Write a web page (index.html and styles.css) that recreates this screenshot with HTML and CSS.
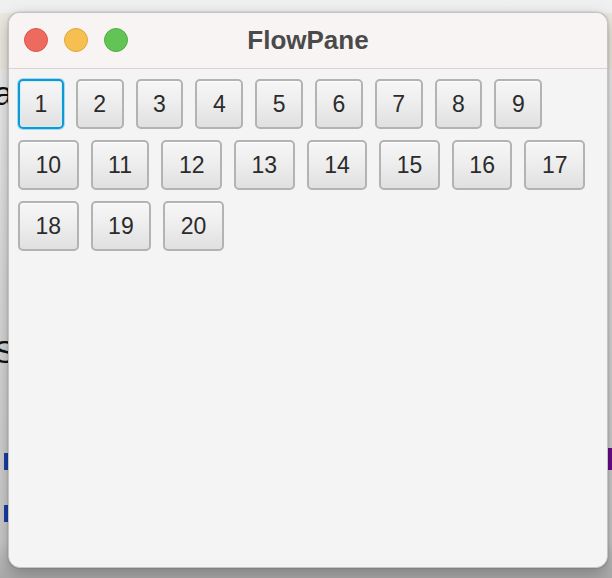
FILE: index.html
```html
<!DOCTYPE html>
<html>
<head>
<meta charset="utf-8">
<title>FlowPane</title>
<link rel="stylesheet" href="styles.css">
</head>
<body>
<div class="desktop">
  <div class="backdrop">
    <div class="bg-strip"></div>
    <span class="frag frag-a">a</span>
    <span class="frag frag-s">S</span>
    <span class="mark mark-1"></span>
    <span class="mark mark-2"></span>
    <span class="mark mark-3"></span>
  </div>
  <div class="window">
    <div class="titlebar">
      <div class="lights">
        <span class="light red"></span>
        <span class="light yellow"></span>
        <span class="light green"></span>
      </div>
      <div class="title">FlowPane</div>
    </div>
    <div class="flow">
      <button class="btn focused">1</button>
      <button class="btn">2</button>
      <button class="btn">3</button>
      <button class="btn">4</button>
      <button class="btn">5</button>
      <button class="btn">6</button>
      <button class="btn">7</button>
      <button class="btn">8</button>
      <button class="btn">9</button>
      <button class="btn">10</button>
      <button class="btn">11</button>
      <button class="btn">12</button>
      <button class="btn">13</button>
      <button class="btn">14</button>
      <button class="btn">15</button>
      <button class="btn">16</button>
      <button class="btn">17</button>
      <button class="btn">18</button>
      <button class="btn">19</button>
      <button class="btn">20</button>
    </div>
  </div>
</div>
</body>
</html>
```
FILE: styles.css
```css
* { box-sizing: border-box; }
html, body {
  margin: 0;
  padding: 0;
  width: 612px;
  height: 578px;
  overflow: hidden;
  background: #e4e4e4;
  font-family: "Liberation Sans", Arial, sans-serif;
}
.desktop {
  display: grid;
  width: 612px;
  height: 578px;
  background: linear-gradient(to bottom, #f0f0f0 0px, #ededed 60px, #d9d9d9 300px, #c9c9c9 540px, #aaaaaa 578px);
}
.backdrop, .window { grid-area: 1 / 1; }
.backdrop {
  position: relative;
  width: 612px;
  height: 578px;
}
.bg-strip {
  height: 56px;
  margin-top: 13px;
  background: #ebe9df;
}
.frag {
  position: absolute;
  color: #111;
  font-size: 34px;
  line-height: 1;
}
.frag-a { left: -6px; top: 76px; }
.frag-s { left: -6px; top: 336px; font-size: 32px; }
.mark {
  position: absolute;
  width: 4px;
  height: 17px;
}
.mark-1 { left: 4px; top: 453px; background: #1c3fa8; }
.mark-2 { left: 4px; top: 505px; background: #1c3fa8; }
.mark-3 { left: 608px; top: 448px; height: 22px; background: #6b0c8c; }

.window {
  margin: 12px 0 0 8px;
  width: 600px;
  height: 556px;
  border-radius: 12px;
  background: #f4f4f4;
  border: 1px solid #c4c4c4;
  box-shadow: 0 6px 16px rgba(0,0,0,0.28), 0 0 2px rgba(0,0,0,0.25);
  overflow: hidden;
  display: flex;
  flex-direction: column;
  z-index: 1;
}
.titlebar {
  height: 56px;
  flex: none;
  background: #f9f4f4;
  border-bottom: 1px solid #d8d4d4;
  display: grid;
  grid-template-columns: 1fr;
  align-items: center;
}
.lights, .title { grid-area: 1 / 1; }
.lights {
  display: flex;
  gap: 16px;
  padding-left: 15px;
  margin-top: -1px;
}
.light {
  width: 24px;
  height: 24px;
  border-radius: 50%;
}
.red { background: #ee6a5e; border: 1px solid #d9574c; }
.yellow { background: #f6bf4f; border: 1px solid #dea73d; }
.green { background: #61c454; border: 1px solid #4fae44; }
.title {
  text-align: center;
  font-weight: bold;
  font-size: 26px;
  color: #4a4a4a;
  margin-top: -1px;
}
.flow {
  display: flex;
  flex-wrap: wrap;
  align-content: flex-start;
  gap: 11px 12px;
  padding: 10px 9px;
}
.btn {
  height: 50px;
  padding: 0 15.5px;
  font-family: "Liberation Sans", Arial, sans-serif;
  font-size: 23px;
  color: #2b2b2b;
  border: 2px solid #b3b3b3;
  border-radius: 5px;
  background: linear-gradient(to bottom, #f6f6f6 0%, #eeeeee 45%, #e0e0e0 100%);
  box-shadow: inset 0 1px 0 #fdfdfd;
  line-height: 1;
}
.btn.focused {
  border-color: #0c9ad6;
  box-shadow: 0 0 0 1px #a9d9ef, inset 0 0 0 1px #d8ecf5;
  padding: 0 14.5px;
}
```
